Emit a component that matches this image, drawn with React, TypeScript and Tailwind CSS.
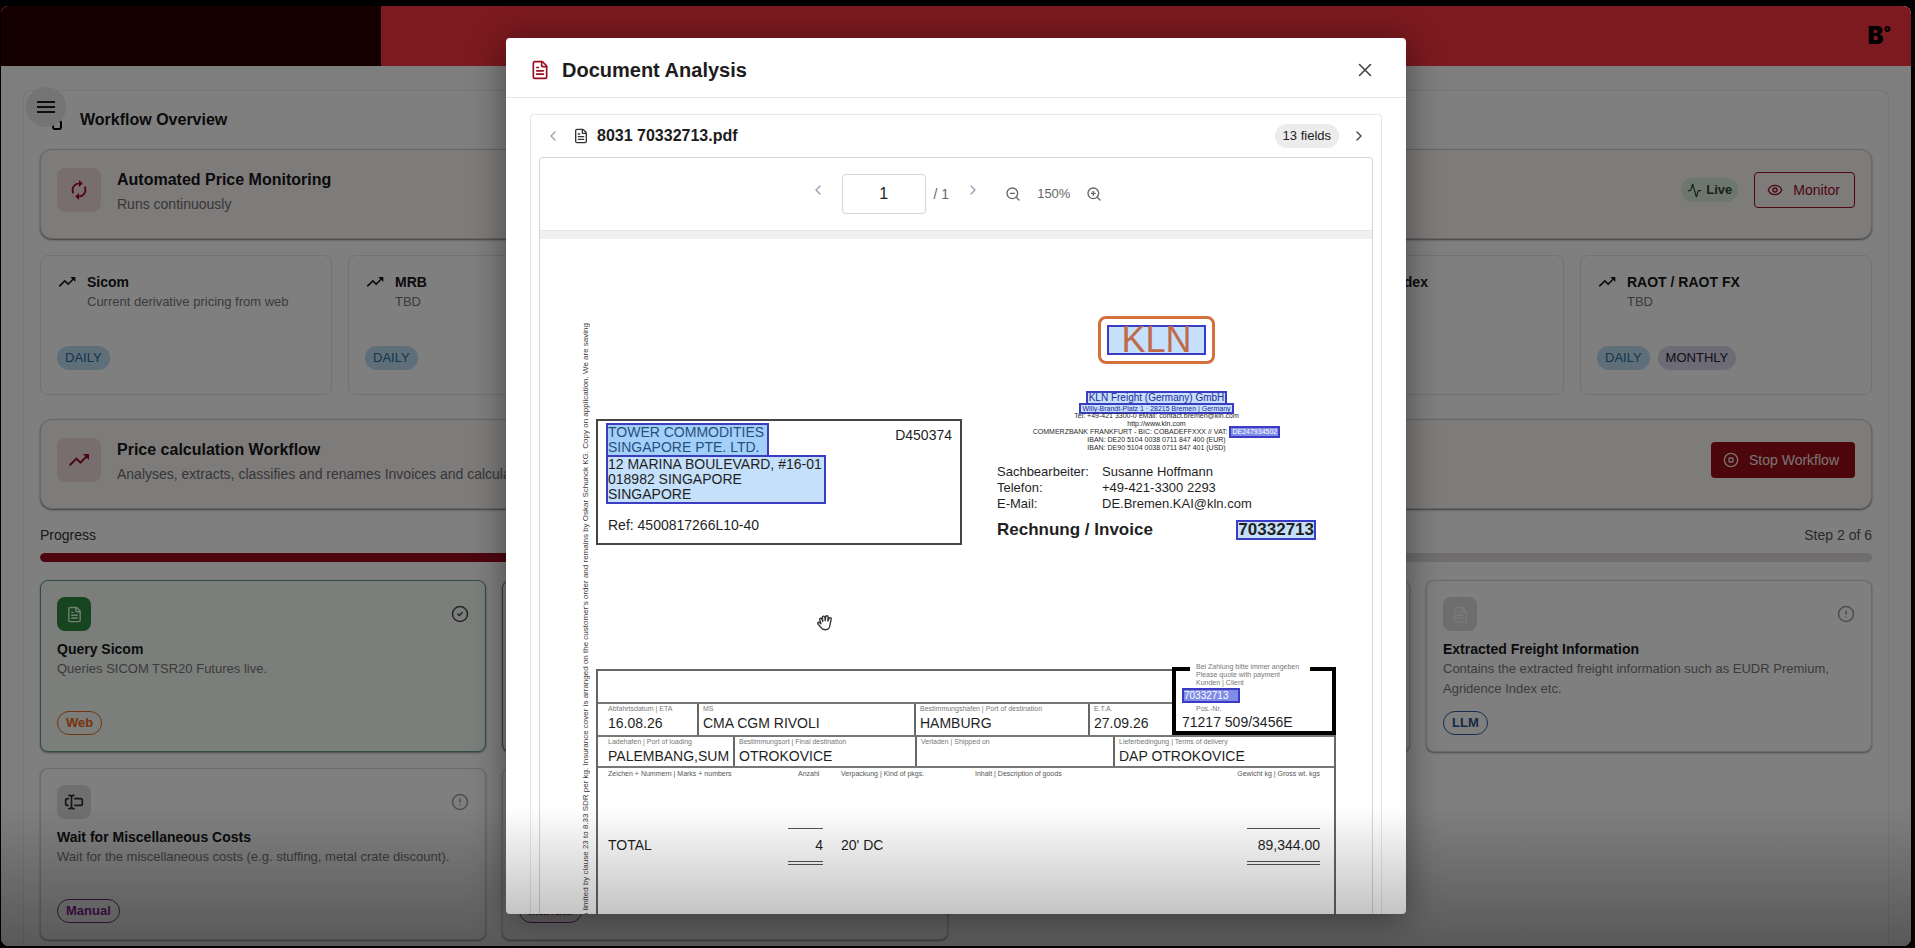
import { useState } from "react";
import type { ReactNode } from "react";
import {
  Activity,
  ChevronLeft,
  ChevronRight,
  CircleAlert,
  CircleCheck,
  CircleStop,
  Eye,
  FileText,
  TextCursorInput,
  Workflow,
  X,
  ZoomIn,
  ZoomOut,
} from "lucide-react";
import { MdAutorenew, MdMenu, MdTrendingUp } from "react-icons/md";

const sources = [
  { name: "Sicom", text: "Current derivative pricing from web", tags: ["DAILY"] },
  { name: "MRB", text: "TBD", tags: ["DAILY"] },
  { name: "SHFE", text: "TBD", tags: ["DAILY"] },
  { name: "ECB FX", text: "TBD", tags: ["DAILY"] },
  { name: "Agridence Index", text: "TBD", tags: ["DAILY"] },
  { name: "RAOT / RAOT FX", text: "TBD", tags: ["DAILY", "MONTHLY"] },
];

type Step = {
  title: string;
  text: string;
  kind: "Web" | "LLM" | "Manual";
  state: "done" | "active" | "open" | "waiting";
};

const steps: Step[] = [
  { title: "Query Sicom", text: "Queries SICOM TSR20 Futures live.", kind: "Web", state: "done" },
  { title: "Document Analysis", text: "Analyses and classifies the documents.", kind: "LLM", state: "active" },
  { title: "Extracted Invoices", text: "Contains the extracted invoices.", kind: "LLM", state: "open" },
  {
    title: "Extracted Freight Information",
    text: "Contains the extracted freight information such as EUDR Premium, Agridence Index etc.",
    kind: "LLM",
    state: "open",
  },
  {
    title: "Wait for Miscellaneous Costs",
    text: "Wait for the miscellaneous costs (e.g. stuffing, metal crate discount).",
    kind: "Manual",
    state: "waiting",
  },
  { title: "Price calculation", text: "Calculates the final price.", kind: "Manual", state: "open" },
];

const kindStyle = {
  Web: "border-[#e06a1c] text-[#f0661a]",
  LLM: "border-[#2a5f9e] text-[#2a5590]",
  Manual: "border-[#7b2d86] text-[#8a1f98]",
};

const cardStyle = {
  done: "border-[#5a9a86] bg-[#f6fdf6]",
  active: "border-gray-500 bg-white",
  open: "border-gray-300 bg-white",
  waiting: "border-gray-300 bg-white",
};

const stepIconStyle = {
  done: "bg-[#2c8a3e] text-[#e6ffe6]",
  active: "bg-gray-200 text-gray-800",
  open: "bg-[#dcdcdc] text-[#f4f4f4]",
  waiting: "bg-[#dedede] text-[#2a2a2a]",
};

function SectionCard({
  icon,
  title,
  text,
  children,
}: {
  icon: ReactNode;
  title: string;
  text: string;
  children: ReactNode;
}) {
  return (
    <div className="flex items-center gap-4 rounded-xl border border-[#d4cccc] bg-[#fcf6f6] px-4 pt-4 pb-6 shadow-[0_1px_2px_rgba(0,0,0,0.5)]">
      <div className="flex size-11 shrink-0 items-center justify-center rounded-lg bg-[#f3dcdf] text-[#9a0c20]">
        {icon}
      </div>
      <div className="min-w-0 flex-1">
        <h2 className="text-base leading-7 font-bold text-[#161616]">{title}</h2>
        <p className="truncate text-sm leading-5 text-[#6e6e6e]">{text}</p>
      </div>
      {children}
    </div>
  );
}

function StepCard({ step }: { step: Step }) {
  return (
    <div className={`rounded-lg border p-4 shadow-[0_1px_2px_rgba(0,0,0,0.4)] ${cardStyle[step.state]}`}>
      <div className="flex items-center justify-between">
        <div className={`flex size-[34px] items-center justify-center rounded-lg ${stepIconStyle[step.state]}`}>
          {step.state === "waiting" ? <TextCursorInput size={20} /> : <FileText size={17} />}
        </div>
        {step.state === "done" ? (
          <CircleCheck size={18} className="text-[#4a4a4a]" />
        ) : (
          <CircleAlert size={18} className="text-[#9c9c9c]" />
        )}
      </div>
      <h3 className="mt-2 text-sm leading-5 font-bold text-[#161616]">{step.title}</h3>
      <p className="min-h-10 text-[13px] leading-5 text-[#777777]">{step.text}</p>
      <span
        className={`mt-3 inline-flex h-6 items-center rounded-full border px-2 text-[13px] font-bold ${kindStyle[step.kind]}`}
      >
        {step.kind}
      </span>
    </div>
  );
}

function Mark({ children, className = "" }: { children: ReactNode; className?: string }) {
  return <div className={`border-2 border-[#3b3bc4] bg-[#c4e0fa] ${className}`}>{children}</div>;
}

function Cell({ label, value, className = "" }: { label: string; value: string; className?: string }) {
  return (
    <div className={`overflow-hidden border-[#666666] whitespace-nowrap ${className}`}>
      <div className="text-[7px] leading-[10px] text-[#777777]">{label}</div>
      <div className="text-sm leading-[19px]">{value}</div>
    </div>
  );
}

function InvoicePage() {
  return (
    <div className="flex bg-white pr-9 pl-10 text-[#1f1f1f]">
      {/* terms of business run up the left margin */}
      <div className="mt-[84px] h-[620px] w-[11px] shrink-0 overflow-hidden">
        <p className="rotate-180 text-[8px] leading-[11px] whitespace-nowrap text-[#3a3a3a] [writing-mode:vertical-rl]">
          We operate exclusively in accordance with the German Freight Forwarders' Standard Terms and Conditions 2017.
          Liability is limited by clause 23 to 8.33 SDR per kg. Insurance cover is arranged on the customer's order and
          remains by Oskar Schunck KG. Copy on application. We are saving
        </p>
      </div>

      <div className="ml-[5px] min-w-0 flex-1">
        <div className="flex items-start justify-between pr-5">
          <div className="mt-[180px] flex h-[126px] w-[366px] justify-between border-2 border-[#444444] pt-0.5 pr-2 pl-2">
            <div className="text-sm leading-[15px] whitespace-nowrap">
              <Mark className="w-[163px] bg-[#a3cffb]! text-[#26507c]">
                TOWER COMMODITIES
                <br />
                SINGAPORE PTE. LTD.
              </Mark>
              <Mark className="-mt-0.5 w-[220px]">
                12 MARINA BOULEVARD, #16-01
                <br />
                018982 SINGAPORE
                <br />
                SINGAPORE
              </Mark>
              <div className="mt-3.5 pl-0.5">Ref: 4500817266L10-40</div>
            </div>
            <div className="mt-0.5 text-sm leading-5">D450374</div>
          </div>

          <div className="mt-[77px] w-[319px]">
            <div className="flex flex-col items-center text-center text-[7px] leading-[8px] whitespace-nowrap">
              <div className="rounded-lg border-3 border-[#d4703c] p-1.5">
                <Mark className="flex h-[30px] w-[99px] items-center justify-center text-4xl text-[#c06a4a]">KLN</Mark>
              </div>
              <Mark className="mt-[27px] px-px text-[10px] leading-[10px] text-[#28289c]">
                KLN Freight (Germany) GmbH
              </Mark>
              <Mark className="-mt-0.5 border px-px leading-[7px] text-[#28289c]">
                Willy-Brandt-Platz 1 · 28215 Bremen | Germany
              </Mark>
              <div className="-mt-0.5">Tel: +49-421 3300-0 eMail: contact.bremen@kln.com</div>
              <div>http://www.kln.com</div>
              <div className="flex h-2 items-center">
                <span>COMMERZBANK FRANKFURT - BIC: COBADEFFXXX // VAT:&nbsp;</span>
                <Mark className="border bg-[#7f8ce8]! px-px text-white">DE247934502</Mark>
              </div>
              <div>IBAN: DE20 5104 0038 0711 847 400 (EUR)</div>
              <div>IBAN: DE90 5104 0038 0711 847 401 (USD)</div>
            </div>

            <dl className="mt-3 grid grid-cols-[105px_1fr] text-[13px] leading-4">
              <dt>Sachbearbeiter:</dt>
              <dd>Susanne Hoffmann</dd>
              <dt>Telefon:</dt>
              <dd>+49-421-3300 2293</dd>
              <dt>E-Mail:</dt>
              <dd>DE.Bremen.KAI@kln.com</dd>
            </dl>

            <div className="mt-2 flex items-center justify-between text-[17px] leading-4 font-bold">
              <span>Rechnung / Invoice</span>
              <Mark className="border">70332713</Mark>
            </div>
          </div>
        </div>

        <div className="mt-[124px] flex">
          <div className="min-w-0 flex-1 border-t-2 border-l-2 border-[#666666]">
            <div className="h-[31px]" />
            <div className="flex h-[33px] border-t-2 border-[#777777]">
              <Cell label="Abfahrtsdatum | ETA" value="16.08.26" className="w-[101px] border-r-2 pl-2.5" />
              <Cell label="MS" value="CMA CGM RIVOLI" className="w-[217px] border-r-2 pl-1" />
              <Cell
                label="Bestimmungshafen | Port of destination"
                value="HAMBURG"
                className="w-[174px] border-r-2 pl-1"
              />
              <Cell label="E.T.A." value="27.09.26" className="flex-1 pl-1" />
            </div>
          </div>
          <div className="-mt-0.5 h-[68px] w-[164px] border-4 border-black pl-1.5">
            <div className="-mt-2 ml-2 w-[120px] bg-white pl-1.5 text-[7px] leading-[8px] whitespace-nowrap text-[#777777]">
              Bei Zahlung bitte immer angeben
              <br />
              Please quote with payment
              <br />
              Kunden | Client
            </div>
            <Mark className="mt-px w-[58px] bg-[#7f8ce8]! text-[10px] leading-[11px] text-white">70332713</Mark>
            <div className="mt-0.5 ml-3.5 text-[7px] leading-[8px] text-[#777777]">Pos.-Nr.</div>
            <div className="text-sm leading-[18px]">71217 509/3456E</div>
          </div>
        </div>

        <div className="h-[150px] border-x-2 border-[#666666]">
          <div className="flex h-[33px] border-y-2 border-[#777777]">
            <Cell label="Ladehafen | Port of loading" value="PALEMBANG,SUM" className="w-[137px] border-r-2 pl-2.5" />
            <Cell label="Bestimmungsort | Final destination" value="OTROKOVICE" className="w-[182px] border-r-2 pl-1" />
            <Cell label="Verladen | Shipped on" value="" className="w-[198px] border-r-2 pl-1" />
            <Cell label="Lieferbedingung | Terms of delivery" value="DAP OTROKOVICE" className="flex-1 pl-1" />
          </div>
          <table className="w-full table-fixed text-left text-sm">
            <thead>
              <tr className="h-3 text-[7px] leading-[12px] text-[#555555]">
                <th className="w-[200px] pl-2.5 font-normal">Zeichen + Nummern | Marks + numbers</th>
                <th className="w-[43px] font-normal">Anzahl</th>
                <th className="w-[134px] font-normal">Verpackung | Kind of pkgs.</th>
                <th className="font-normal">Inhalt | Description of goods</th>
                <th className="w-[127px] pr-3.5 text-right font-normal">Gewicht kg | Gross wt. kgs</th>
              </tr>
            </thead>
            <tbody>
              <tr className="align-top">
                <td className="pt-[55px] pl-2.5 leading-5">TOTAL</td>
                <td className="pt-12 pr-[18px] text-right">
                  <div className="-ml-2.5 border-t border-[#555555] pt-1.5 leading-5">4</div>
                  <div className="mt-1.5 -ml-2.5 h-1 border-y border-[#555555]" />
                </td>
                <td className="pt-[55px] leading-5">20' DC</td>
                <td />
                <td className="pt-12 pr-3.5 text-right">
                  <div className="ml-auto w-[73px] border-t border-[#555555] pt-1.5 leading-5">89,344.00</div>
                  <div className="mt-1.5 ml-auto h-1 w-[73px] border-y border-[#555555]" />
                </td>
              </tr>
            </tbody>
          </table>
        </div>
        <div className="h-10 border-x-2 border-[#666666]" />
      </div>
    </div>
  );
}

function HandCursor() {
  return (
    <svg
      viewBox="0 0 24 24"
      className="pointer-events-none absolute top-[576px] left-[310px] size-4.5"
      fill="white"
      stroke="#333333"
      strokeWidth="1.8"
      strokeLinejoin="round"
      strokeLinecap="round"
      aria-hidden="true"
    >
      <path d="M6.500 13 5 7.500a1.500 1.500 0 0 1 2.900-.8L9 10 8.600 4.500a1.600 1.600 0 0 1 3.200-.2L12.300 9l.6-5.200a1.600 1.600 0 0 1 3.200.3L15.800 9.500l1.500-3.600a1.500 1.500 0 0 1 2.900 1L18.800 14c-.5 4.500-2.600 7-6.300 7-3.300 0-5-1.400-6.700-3.800L2.500 13c-.8-1.500.9-2.700 2.100-1.700z" />
    </svg>
  );
}

function DocumentDialog({ onClose }: { onClose: () => void }) {
  const [page, setPage] = useState("1");

  return (
    <div
      role="dialog"
      aria-labelledby="dialog-title"
      className="relative flex w-full max-w-[900px] flex-col overflow-hidden rounded bg-white shadow-[0_4px_36px_rgba(0,0,0,0.45)]"
    >
      <div className="flex items-center gap-3 border-b border-gray-200 px-6 pt-[15px] pb-2.5">
        <FileText size={20} className="text-[#9a0c20]" />
        <h2 id="dialog-title" className="flex-1 text-xl leading-[30px] font-bold text-[#1c1c1c]">
          Document Analysis
        </h2>
        <button type="button" aria-label="Close" onClick={onClose} className="p-1.5 text-[#444444]">
          <X size={22} strokeWidth={1.75} />
        </button>
      </div>

      <div className="flex min-h-0 flex-1 flex-col px-6 pt-4">
        <div className="flex min-h-0 flex-1 flex-col rounded-t border border-b-0 border-gray-200 px-2">
          <div className="flex h-[42px] items-center px-1.5">
            <button type="button" aria-label="Previous document" className="mr-3 text-gray-400">
              <ChevronLeft size={16} />
            </button>
            <FileText size={16} className="mr-2 text-[#333333]" />
            <span className="flex-1 text-base font-bold text-[#1c1c1c]">8031 70332713.pdf</span>
            <span className="mr-3 rounded-full bg-[#ececec] px-2 text-[13px] leading-6 text-[#222222]">13 fields</span>
            <button type="button" aria-label="Next document" className="text-[#444444]">
              <ChevronRight size={16} />
            </button>
          </div>

          <div className="flex min-h-0 flex-1 flex-col rounded-t border border-b-0 border-gray-300">
            <div className="flex h-[73px] items-center justify-center border-b border-gray-200 text-[#666666]">
              <button type="button" aria-label="Previous page" className="mr-4 mb-2 text-gray-400">
                <ChevronLeft size={16} />
              </button>
              <input
                aria-label="Page"
                value={page}
                onChange={(e) => setPage(e.target.value)}
                className="h-10 w-21 rounded border border-gray-300 text-center text-base text-[#222222]"
              />
              <span className="ml-2 text-sm">/ 1</span>
              <button type="button" aria-label="Next page" className="mb-2 ml-4 text-gray-400">
                <ChevronRight size={16} />
              </button>
              <button type="button" aria-label="Zoom out" className="ml-6">
                <ZoomOut size={16} />
              </button>
              <span className="mx-4 text-[13px]">150%</span>
              <button type="button" aria-label="Zoom in">
                <ZoomIn size={16} />
              </button>
            </div>
            <div className="min-h-0 flex-1 overflow-hidden bg-[#f0f0f0] pt-2">
              <InvoicePage />
            </div>
          </div>
        </div>
      </div>
      <HandCursor />
    </div>
  );
}

export default function App() {
  const [open, setOpen] = useState(true);

  return (
    <div className="h-screen bg-black pt-1.5 pr-1 pb-0.5 pl-px font-['Liberation_Sans',Arial,sans-serif]">
      <div className="relative flex h-full flex-col overflow-hidden rounded-lg bg-[#fdfdfd]">
        <header className="flex h-[60px] shrink-0 items-center justify-between bg-[#f8343f] pr-5">
          <div className="h-full w-[380px] bg-[#2a0000]" />
          <a href="#home" aria-label="Home" className="flex items-start font-['Inter',sans-serif] font-black text-black">
            <span className="text-2xl leading-7">B</span>
            <span className="text-base leading-5">°</span>
          </a>
        </header>

        <button
          type="button"
          aria-label="Menu"
          className="absolute top-[81px] left-[25px] z-10 flex size-10 items-center justify-center rounded-full bg-[#e9e9e9] text-[#1c1c1c]"
        >
          <MdMenu size={24} />
        </button>

        <main className="mx-[22px] mt-6 min-h-0 flex-1 overflow-hidden rounded-t-lg border border-b-0 border-[#ececec] bg-white px-4">
          <div className="flex h-[58px] items-center gap-4">
            <Workflow size={24} />
            <h1 className="text-base font-bold text-[#161616]">Workflow Overview</h1>
          </div>

          <SectionCard icon={<MdAutorenew size={22} />} title="Automated Price Monitoring" text="Runs continuously">
            <span className="flex h-6 items-center gap-1 rounded-full bg-[#dcefdc] px-1.5 text-[13px] font-bold text-[#2a4a2c]">
              <Activity size={15} /> Live
            </span>
            <button
              type="button"
              className="flex h-9 items-center gap-2.5 rounded border border-[#9a0c20] pr-3.5 pl-3 text-sm text-[#9a0c20]"
            >
              <Eye size={16} /> Monitor
            </button>
          </SectionCard>

          <div className="mt-4 mb-6 grid grid-cols-6 gap-4">
            {sources.map((source) => (
              <div key={source.name} className="rounded-lg border border-[#e4e4e4] px-4 pt-4 pb-6">
                <div className="flex gap-2.5">
                  <MdTrendingUp size={20} className="shrink-0 text-[#161616]" />
                  <div className="min-h-[60px]">
                    <h3 className="text-sm leading-5 font-bold text-[#161616]">{source.name}</h3>
                    <p className="text-[13px] leading-5 text-[#777777]">{source.text}</p>
                  </div>
                </div>
                <div className="mt-3.5 flex gap-2">
                  {source.tags.map((tag) => (
                    <span
                      key={tag}
                      className={
                        tag === "DAILY"
                          ? "rounded-full bg-[#bcdff5] px-2 text-[13px] leading-6 text-[#2a6a9a]"
                          : "rounded-full bg-[#dad6ea] px-2 text-[13px] leading-6 text-[#22202e]"
                      }
                    >
                      {tag}
                    </span>
                  ))}
                </div>
              </div>
            ))}
          </div>

          <SectionCard
            icon={<MdTrendingUp size={24} />}
            title="Price calculation Workflow"
            text="Analyses, extracts, classifies and renames Invoices and calculates the price"
          >
            <button
              type="button"
              className="flex h-9 items-center gap-2.5 rounded bg-[#9a0c18] pr-4 pl-3 text-sm text-[#f6e4e4]"
            >
              <CircleStop size={16} /> Stop Workflow
            </button>
          </SectionCard>

          <div className="mt-4 flex justify-between text-sm leading-5">
            <span className="text-[#333333]">Progress</span>
            <span className="text-[#555555]">Step 2 of 6</span>
          </div>
          <div className="mt-2 mb-4.5 h-[9px] overflow-hidden rounded-full bg-[#dedada]">
            <div className="h-full w-1/3 rounded-full bg-[#9a0c20]" />
          </div>

          <div className="grid grid-cols-4 gap-4">
            {steps.map((step) => (
              <StepCard key={step.title} step={step} />
            ))}
          </div>
        </main>

        {open ? (
          <div className="absolute inset-0 z-20 flex justify-center bg-black/50 py-8">
            <DocumentDialog onClose={() => setOpen(false)} />
          </div>
        ) : null}

        <div className="pointer-events-none absolute inset-x-0 bottom-0 z-30 h-[140px] bg-linear-to-b from-transparent to-black/30" />
      </div>
    </div>
  );
}
